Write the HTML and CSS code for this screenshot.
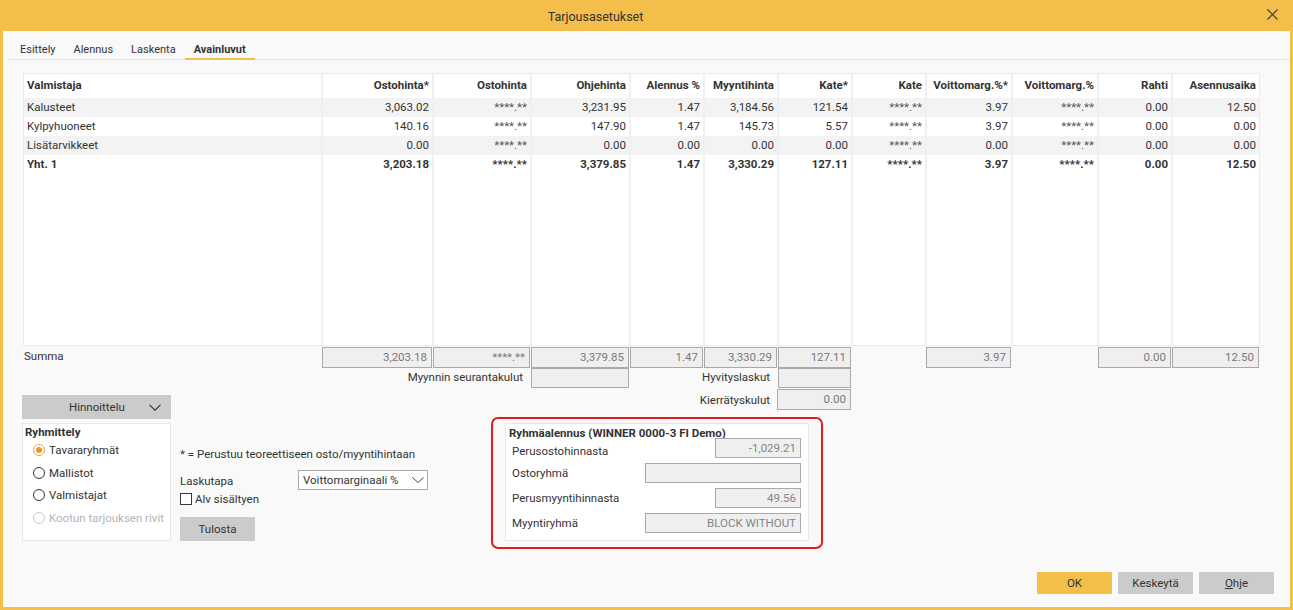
FILE: index.html
```html
<!DOCTYPE html>
<html lang="fi">
<head>
<meta charset="utf-8">
<title>Tarjousasetukset</title>
<link rel="stylesheet" href="styles.css">
</head>
<body>
<div class="dialog">
  <div class="titlebar">
    <div class="title">Tarjousasetukset</div>
    <div class="close">
      <svg width="11" height="11" viewBox="0 0 11 11"><path d="M0.5 0.5L10.5 10.5M10.5 0.5L0.5 10.5" stroke="#3a3a3a" stroke-width="1.1" fill="none"/></svg>
    </div>
  </div>
  <div class="content">
    <div class="tabs">
      <div class="tab">Esittely</div>
      <div class="tab">Alennus</div>
      <div class="tab">Laskenta</div>
      <div class="tab active">Avainluvut</div>
    </div>

    <div class="table">
      <div class="row head">
        <div class="c l">Valmistaja</div>
        <div class="c">Ostohinta*</div>
        <div class="c">Ostohinta</div>
        <div class="c">Ohjehinta</div>
        <div class="c">Alennus %</div>
        <div class="c">Myyntihinta</div>
        <div class="c">Kate*</div>
        <div class="c">Kate</div>
        <div class="c">Voittomarg.%*</div>
        <div class="c">Voittomarg.%</div>
        <div class="c">Rahti</div>
        <div class="c">Asennusaika</div>
      </div>
      <div class="row alt">
        <div class="c l">Kalusteet</div>
        <div class="c">3,063.02</div>
        <div class="c mask">****.**</div>
        <div class="c">3,231.95</div>
        <div class="c">1.47</div>
        <div class="c">3,184.56</div>
        <div class="c">121.54</div>
        <div class="c mask">****.**</div>
        <div class="c">3.97</div>
        <div class="c mask">****.**</div>
        <div class="c">0.00</div>
        <div class="c">12.50</div>
      </div>
      <div class="row">
        <div class="c l">Kylpyhuoneet</div>
        <div class="c">140.16</div>
        <div class="c mask">****.**</div>
        <div class="c">147.90</div>
        <div class="c">1.47</div>
        <div class="c">145.73</div>
        <div class="c">5.57</div>
        <div class="c mask">****.**</div>
        <div class="c">3.97</div>
        <div class="c mask">****.**</div>
        <div class="c">0.00</div>
        <div class="c">0.00</div>
      </div>
      <div class="row alt">
        <div class="c l">Lisätarvikkeet</div>
        <div class="c">0.00</div>
        <div class="c mask">****.**</div>
        <div class="c">0.00</div>
        <div class="c">0.00</div>
        <div class="c">0.00</div>
        <div class="c">0.00</div>
        <div class="c mask">****.**</div>
        <div class="c">0.00</div>
        <div class="c mask">****.**</div>
        <div class="c">0.00</div>
        <div class="c">0.00</div>
      </div>
      <div class="row total">
        <div class="c l">Yht. 1</div>
        <div class="c">3,203.18</div>
        <div class="c">****.**</div>
        <div class="c">3,379.85</div>
        <div class="c">1.47</div>
        <div class="c">3,330.29</div>
        <div class="c">127.11</div>
        <div class="c">****.**</div>
        <div class="c">3.97</div>
        <div class="c">****.**</div>
        <div class="c">0.00</div>
        <div class="c">12.50</div>
      </div>
      <div class="row fill">
        <div class="c l"></div><div class="c"></div><div class="c"></div><div class="c"></div>
        <div class="c"></div><div class="c"></div><div class="c"></div><div class="c"></div>
        <div class="c"></div><div class="c"></div><div class="c"></div><div class="c"></div>
      </div>
    </div>

    <div class="sums">
      <div class="sum-label">Summa</div>
      <div class="box">3,203.18</div>
      <div class="box">****.**</div>
      <div class="box">3,379.85</div>
      <div class="box">1.47</div>
      <div class="box">3,330.29</div>
      <div class="box">127.11</div>
      <div></div>
      <div class="box">3.97</div>
      <div></div>
      <div class="box">0.00</div>
      <div class="box">12.50</div>

      <div class="side-label span3">Myynnin seurantakulut</div>
      <div class="box"></div>
      <div class="side-label span2">Hyvityslaskut</div>
      <div class="box"></div>
    </div>

    <div class="lower">
      <div class="left">
        <div class="dropbtn">
          <span>Hinnoittelu</span>
          <svg class="chev" width="12" height="7" viewBox="0 0 12 7"><path d="M0.5 0.8L6 6.2L11.5 0.8" stroke="#333" stroke-width="1.1" fill="none"/></svg>
        </div>
        <div class="panel">
          <div class="panel-title">Ryhmittely</div>
          <div class="radios">
            <div class="radio-row"><span class="radio on"></span><span>Tavararyhmät</span></div>
            <div class="radio-row"><span class="radio"></span><span>Mallistot</span></div>
            <div class="radio-row"><span class="radio"></span><span>Valmistajat</span></div>
            <div class="radio-row disabled"><span class="radio"></span><span>Kootun tarjouksen rivit</span></div>
          </div>
        </div>
      </div>

      <div class="mid">
        <div class="note">* = Perustuu teoreettiseen osto/myyntihintaan</div>
        <div class="field-row">
          <span class="field-label">Laskutapa</span>
          <div class="select">
            <span>Voittomarginaali %</span>
            <svg width="12" height="6" viewBox="0 0 12 6"><path d="M0.5 0.5L6 5.5L11.5 0.5" stroke="#444" stroke-width="1" fill="none"/></svg>
          </div>
        </div>
        <div class="check-row"><span class="checkbox"></span><span>Alv sisältyen</span></div>
        <div class="btn print">Tulosta</div>
      </div>

      <div class="right">
        <div class="kierr">
          <span class="kierr-label">Kierrätyskulut</span>
          <div class="box kbox">0.00</div>
        </div>
        <div class="highlight">
          <div class="group">
            <div class="group-title">Ryhmäalennus (WINNER 0000-3 FI Demo)</div>
            <div class="group-rows">
              <span class="g-label first">Perusostohinnasta</span>
              <div class="box gbox short">-1,029.21</div>
              <span class="g-label">Ostoryhmä</span>
              <div class="box gbox long"></div>
              <span class="g-label">Perusmyyntihinnasta</span>
              <div class="box gbox short">49.56</div>
              <span class="g-label">Myyntiryhmä</span>
              <div class="box gbox long">BLOCK WITHOUT</div>
            </div>
          </div>
        </div>
      </div>
    </div>

    <div class="actions">
      <div class="btn primary">OK</div>
      <div class="btn">Keskeytä</div>
      <div class="btn"><span class="ul">O</span>hje</div>
    </div>
  </div>
</div>
</body>
</html>
```
FILE: styles.css
```css
* { box-sizing: border-box; }
html, body { margin: 0; padding: 0; }
body {
  font-family: Roboto, "Liberation Sans", Arial, sans-serif;
  font-size: 11.5px;
  color: #333;
  background: #fff;
}

.dialog {
  width: 1293px;
  height: 610px;
  background: #f9f9f9;
  border: 3px solid #f4be4b;
  border-top: 0;
  display: flex;
  flex-direction: column;
}

.titlebar {
  height: 31px;
  flex: none;
  background: #f4be4b;
  display: flex;
  align-items: center;
}
.title {
  flex: 1;
  text-align: center;
  font-size: 12.5px;
  padding-top: 1px;
}
.close {
  width: 102px;
  display: flex;
  justify-content: flex-end;
  padding-right: 12px;
  margin-top: -3px;
}
.close svg { display: block; }

.content {
  flex: 1;
  display: flex;
  flex-direction: column;
  padding: 0 16px 0 20px;
}

/* tabs */
.tabs {
  display: flex;
  margin-left: -14px;
  margin-right: -16px;
  padding-top: 10px;
  border-bottom: 1px solid #e4e4e4;
}
.tab {
  padding: 0 9px;
  height: 19px;
  line-height: 17px;
  font-size: 11px;
  border-bottom: 2px solid transparent;
  margin-bottom: -1px;
}
.tab:first-child { margin-left: 2px; }
.tab.active {
  font-weight: bold;
  border-bottom-color: #f4be4b;
}

/* table */
.table {
  margin-top: 13px;
  width: 1237px;
  height: 273px;
  border: 1px solid #ebebeb;
  background: #fff;
  display: grid;
  grid-template-columns: 297px 111px 98px 99px 74px 74px 74px 74px 86px 86px 74px 88px;
  grid-template-rows: 24px 19px 19px 19px 19px 1fr;
}
.row { display: contents; }
.c {
  padding: 0 3px;
  text-align: right;
  white-space: nowrap;
  overflow: hidden;
  line-height: 19px;
  border-left: 2px solid #edf0f5;
}
.c.l {
  text-align: left;
  border-left: 0;
}
.head .c {
  font-weight: bold;
  line-height: 23px;
}
.alt .c { background: #f3f3f3; }
.total .c { font-weight: bold; }
.mask { color: #555; }

/* sums */
.sums {
  margin-top: 1px;
  margin-left: 1px;
  display: grid;
  grid-template-columns: 297px 111px 98px 99px 74px 74px 74px 74px 86px 86px 74px 88px;
  grid-template-rows: 21px 20px;
}
.sum-label {
  line-height: 19px;
}
.box {
  margin-left: 1px;
  background: #efefef;
  border: 1px solid #a9a9a9;
  color: #7a7a7a;
  text-align: right;
  padding-right: 4px;
  line-height: 18px;
  white-space: nowrap;
  overflow: hidden;
}
.side-label {
  text-align: right;
  padding-right: 7px;
  line-height: 19px;
}
.span3 { grid-column: 1 / span 3; }
.span2 { grid-column: 5 / span 2; }

/* lower area */
.lower {
  display: flex;
  align-items: flex-start;
  margin-left: -1px;
}
.left {
  width: 149px;
  margin-top: 7px;
}
.dropbtn {
  height: 24px;
  background: #cbcbcb;
  display: flex;
  align-items: center;
  padding: 0 10px 0 47px;
}
.dropbtn .chev { margin-left: auto; display: block; }
.panel {
  margin-top: 4px;
  height: 118px;
  background: #fff;
  border: 1px solid #e6e6e6;
  padding-left: 2px;
}
.panel-title {
  font-weight: bold;
  line-height: 16px;
}
.radios {
  margin-top: -1px;
  padding-left: 8px;
}
.radio-row {
  height: 22.5px;
  display: flex;
  align-items: center;
  gap: 4px;
}
.radio {
  width: 12px;
  height: 12px;
  border: 1px solid #333;
  border-radius: 50%;
  background: #fff;
  display: flex;
  align-items: center;
  justify-content: center;
  flex: none;
}
.radio.on { border-color: #e6a844; }
.radio.on::after {
  content: "";
  width: 6px;
  height: 6px;
  border-radius: 50%;
  background: #e39c2e;
}
.radio-row.disabled { color: #b4b4b4; }
.radio-row.disabled .radio { border-color: #c8c8c8; }

.mid {
  width: 311px;
  margin-left: 9px;
  margin-top: 58px;
}
.note { line-height: 16px; }
.field-row {
  margin-top: 8px;
  height: 20px;
  display: flex;
  align-items: center;
}
.field-label { width: 118px; padding-top: 1px; }
.select {
  width: 130px;
  height: 20px;
  background: #fff;
  border: 1px solid #a9a9a9;
  display: flex;
  align-items: center;
  padding: 0 3px 0 4px;
}
.select svg { margin-left: auto; display: block; }
.check-row {
  margin-top: 2px;
  height: 14px;
  display: flex;
  align-items: center;
  gap: 3px;
}
.checkbox {
  width: 12px;
  height: 12px;
  border: 1px solid #3d3340;
  background: #fff;
  flex: none;
}
.btn {
  width: 75px;
  height: 22px;
  background: #cbcbcb;
  display: flex;
  align-items: center;
  justify-content: center;
}
.btn.print {
  margin-top: 11px;
  height: 24px;
}
.btn.primary { background: #f4be4b; }
.ul { text-decoration: underline; }

.right {
  width: 360px;
  margin-top: 1px;
}
.kierr {
  height: 21px;
  display: flex;
  justify-content: flex-end;
  align-items: center;
}
.kierr-label { padding-right: 7px; }
.box.kbox {
  width: 74px;
  height: 21px;
  margin-left: 0;
  line-height: 19px;
}
.highlight {
  margin-top: 7px;
  width: 332px;
  height: 132px;
  border: 2px solid #e51c1c;
  border-radius: 7px;
  padding: 4px 12px 6px 12px;
}
.group {
  height: 118px;
  background: #fff;
  border: 1px solid #e8e8e8;
  padding: 3px 7px 0 3px;
}
.group-title {
  font-weight: bold;
  line-height: 13px;
  white-space: nowrap;
}
.group-rows {
  margin-top: -2px;
  display: grid;
  grid-template-columns: 1fr auto;
  grid-auto-rows: 20px;
  row-gap: 5px;
  align-items: center;
}
.g-label { padding-left: 3px; }
.g-label.first {
  align-self: end;
  line-height: 14px;
}
.box.gbox {
  height: 20px;
  margin-left: 0;
  justify-self: end;
  color: #858585;
}
.gbox.short { width: 86px; }
.gbox.long { width: 156px; }

.actions {
  margin-top: 23px;
  display: flex;
  justify-content: flex-end;
  gap: 6px;
}
```
